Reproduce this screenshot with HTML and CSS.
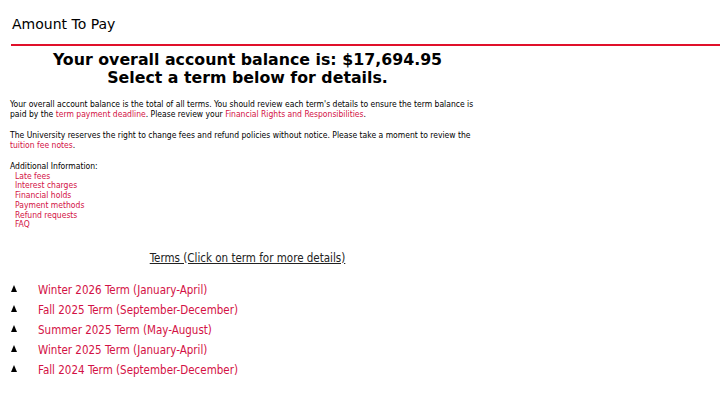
FILE: index.html
```html
<!DOCTYPE html>
<html>
<head>
<meta charset="utf-8">
<link rel="stylesheet" href="styles.css">
</head>
<body>
<div class="page">
  <h1 class="title">Amount To Pay</h1>
  <div class="main">
    <h2 class="balance">Your overall account balance is: $17,694.95<br>Select a term below for details.</h2>
    <p class="info">Your overall account balance is the total of all terms. You should review each term's details to ensure the term balance is paid by the <a href="#">term payment deadline</a>. Please review your <a href="#">Financial Rights and Responsibilities</a>.</p>
    <p class="info">The University reserves the right to change fees and refund policies without notice. Please take a moment to review the <a href="#">tuition fee notes</a>.</p>
    <div class="info additional">
      <div>Additional Information:</div>
      <ul class="addl">
        <li><a href="#">Late fees</a></li>
        <li><a href="#">Interest charges</a></li>
        <li><a href="#">Financial holds</a></li>
        <li><a href="#">Payment methods</a></li>
        <li><a href="#">Refund requests</a></li>
        <li><a href="#">FAQ</a></li>
      </ul>
    </div>
    <div class="terms-head"><span>Terms (Click on term for more details)</span></div>
    <ul class="terms">
      <li><span class="tri"></span><a href="#">Winter 2026 Term (January-April)</a></li>
      <li><span class="tri"></span><a href="#">Fall 2025 Term (September-December)</a></li>
      <li><span class="tri"></span><a href="#">Summer 2025 Term (May-August)</a></li>
      <li><span class="tri"></span><a href="#">Winter 2025 Term (January-April)</a></li>
      <li><span class="tri"></span><a href="#">Fall 2024 Term (September-December)</a></li>
    </ul>
  </div>
</div>
</body>
</html>
```
FILE: styles.css
```css
html, body {
  margin: 0;
  padding: 0;
  background: #fff;
}
body {
  font-family: "DejaVu Sans", Verdana, sans-serif;
  color: #000;
}
a {
  color: #d31145;
  text-decoration: none;
}
.page {
  padding-top: 14px;
}
.title {
  margin: 0 0 0 11px;
  padding: 0 0 10px 1px;
  font-size: 14px;
  font-weight: normal;
  line-height: 20px;
  border-bottom: 2px solid #e0102a;
}
.main {
  width: 475px;
  padding-left: 10px;
}
.balance {
  margin: 5px 0 0;
  text-align: center;
  font-size: 15.8px;
  line-height: 18px;
  font-weight: bold;
}
.info {
  font-family: "DejaVu Sans Condensed", Tahoma, sans-serif;
  font-size: 8.5px;
  line-height: 10px;
  color: #000;
  margin: 12px 0 0;
}
.info a {
  line-height: 0;
}
.info + .info {
  margin-top: 11px;
}
.info + .additional {
  margin-top: 12px;
  line-height: 9.7px;
}
.addl {
  list-style: none;
  margin: 0;
  padding: 0 0 0 5px;
}
.terms-head {
  margin-top: 21px;
  text-align: center;
  font-family: "DejaVu Sans Condensed", Tahoma, sans-serif;
  font-size: 11.5px;
  line-height: 14px;
  color: #222;
}
.terms-head span {
  text-decoration: underline;
}
.terms {
  list-style: none;
  margin: 15px 0 0;
  padding: 0;
}
.terms li {
  display: flex;
  align-items: center;
  height: 20px;
  font-family: "DejaVu Sans Condensed", Tahoma, sans-serif;
  font-size: 11.5px;
}
.tri {
  width: 0;
  height: 0;
  margin: 0 21px 2px 1px;
  border-left: 3.5px solid transparent;
  border-right: 3.5px solid transparent;
  border-bottom: 7px solid #000;
}
```
